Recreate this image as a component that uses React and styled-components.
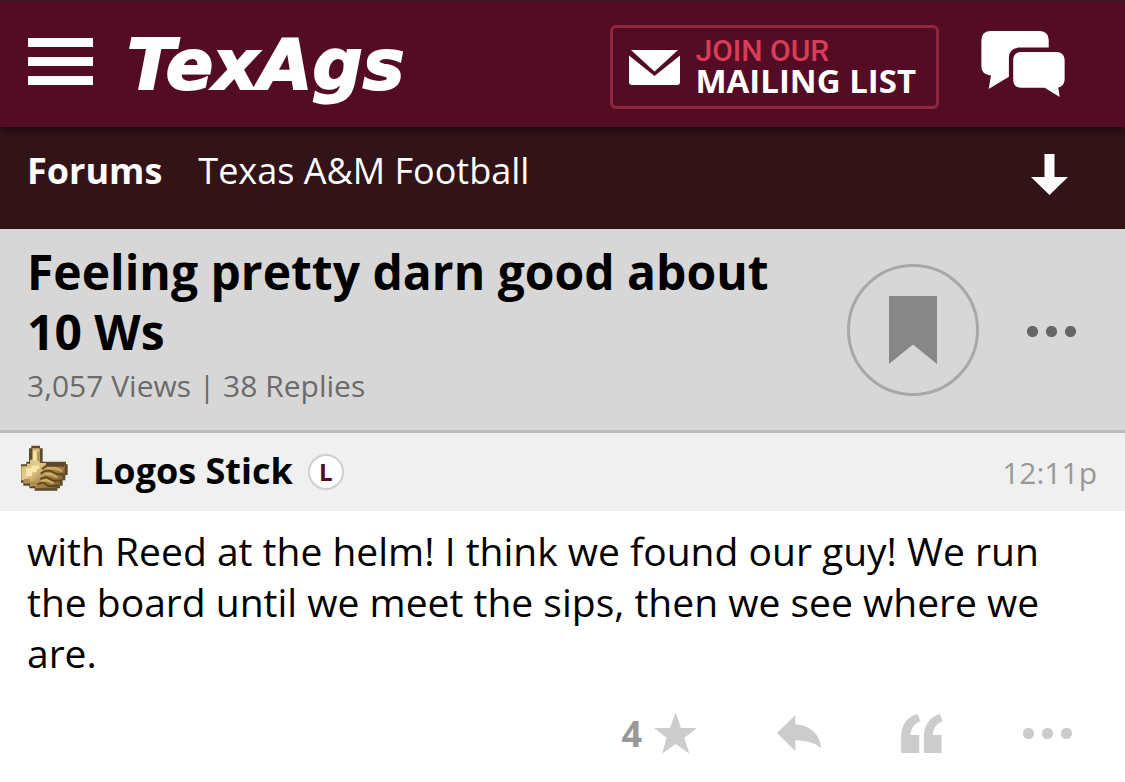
import React from "react";
import styled, { createGlobalStyle } from "styled-components";

const GlobalStyle = createGlobalStyle`
  *, *::before, *::after { box-sizing: border-box; }
  body {
    margin: 0;
    background: #fff;
    color: #000;
    font-family: "Open Sans", "Noto Sans", sans-serif;
  }
  button { font: inherit; color: inherit; }
  svg { display: block; flex: none; }
`;

const PlainButton = styled.button`
  display: flex;
  align-items: center;
  justify-content: center;
  padding: 0;
  border: 0;
  background: none;
  cursor: pointer;
`;

const TopBar = styled.header`
  position: relative;
  display: flex;
  align-items: center;
  height: 127px;
  padding: 4px 60px 0 28px;
  background: #540c24;
  border-top: 3px solid #431424;
  box-shadow: 0 3px 8px rgba(0, 0, 0, 0.5);
`;

const MenuButton = styled(PlainButton)`
  flex-direction: column;
  gap: 10px;
  width: 65px;
  padding-bottom: 12px;
`;

const MenuLine = styled.span`
  width: 100%;
  height: 9px;
  background: #fff;
`;

const Logo = styled.a`
  margin-left: 34px;
  padding-bottom: 4px;
  color: #fff;
  font-family: "DejaVu Sans", sans-serif;
  font-size: 70px;
  font-weight: 700;
  font-style: italic;
  line-height: 76px;
  text-decoration: none;
  -webkit-text-stroke: 2px #fff;
`;

const MailingLink = styled.a`
  display: flex;
  align-items: center;
  gap: 15px;
  height: 84px;
  margin-left: auto;
  padding: 0 20px 0 16px;
  border: 3px solid #8e2840;
  border-radius: 6px;
  color: #fff;
  text-decoration: none;
`;

const MailingText = styled.span`
  display: flex;
  flex-direction: column;
  padding-bottom: 4px;
  white-space: nowrap;
`;

const MailingLead = styled.span`
  color: #d83c58;
  font-family: Roboto, sans-serif;
  font-size: 30px;
  font-weight: 500;
  line-height: 31px;
`;

const MailingName = styled.strong`
  font-size: 33px;
  font-weight: 700;
  line-height: 30px;
`;

const ChatButton = styled(PlainButton)`
  margin-left: 42px;
  padding-bottom: 6px;
`;

const Crumbs = styled.nav`
  display: flex;
  align-items: flex-start;
  gap: 36px;
  height: 102px;
  padding: 19px 28px 0 27px;
  background: #321318;
  color: #fff;
`;

const Crumb = styled.a`
  color: inherit;
  font-size: 36px;
  font-weight: ${(p) => (p.$strong ? 700 : 400)};
  line-height: 50px;
  text-decoration: none;
`;

const JumpButton = styled(PlainButton)`
  width: 96px;
  height: 56px;
  margin-left: auto;
`;

const Topic = styled.section`
  display: flex;
  align-items: center;
  gap: 28px;
  padding: 13px 28px 24px 27px;
  background: #d7d7d7;
  border-bottom: 3px solid #bcbcbc;
`;

const TopicText = styled.div`
  flex: 1;
  min-width: 0;
`;

const TopicTitle = styled.h1`
  margin: 0 0 4px;
  font-size: 48px;
  font-weight: 700;
  line-height: 60px;
`;

const TopicStats = styled.p`
  margin: 0;
  color: #6b6b6b;
  font-size: 30px;
  line-height: 40px;
`;

const TopicTools = styled.div`
  display: flex;
  align-items: center;
  gap: 26px;
  padding-top: 12px;
`;

const BookmarkButton = styled(PlainButton)`
  width: 132px;
  height: 132px;
  border: 3px solid #a8a8a8;
  border-radius: 50%;
`;

const MoreButton = styled(PlainButton)`
  width: 92px;
  height: 60px;
  padding-top: 3px;
`;

const PostHeader = styled.header`
  display: flex;
  align-items: center;
  height: 78px;
  padding: 0 28px 0 20px;
  background: #f0f0f0;
`;

const Avatar = styled.span`
  padding-bottom: 9px;
`;

const Author = styled.a`
  margin: 0 15px 0 25px;
  color: #000;
  font-size: 36px;
  font-weight: 700;
  line-height: 50px;
  padding-bottom: 3px;
  text-decoration: none;
`;

const LevelBadge = styled.span`
  display: flex;
  align-items: center;
  justify-content: center;
  width: 36px;
  height: 36px;
  border: 2px solid #cfcfcf;
  border-radius: 50%;
  background: #fff;
  color: #500c1c;
  font-size: 24px;
  font-weight: 700;
  line-height: 30px;
`;

const PostTime = styled.time`
  margin-left: auto;
  padding-top: 2px;
  color: #999;
  font-size: 30px;
  line-height: 40px;
`;

const PostBody = styled.p`
  margin: 0;
  padding: 14px 28px 0 27px;
  font-size: 39px;
  line-height: 51px;
`;

const PostActions = styled.footer`
  display: flex;
  align-items: center;
  justify-content: flex-end;
  gap: 80px;
  padding: 29px 53px 23px 28px;
`;

const ActionButton = styled(PlainButton)`
  gap: 12px;
  height: 52px;
  color: #999;
  font-size: 36px;
  font-weight: 700;
`;

const Dots = ({ color }) => (
  <svg width="49" height="11" viewBox="0 0 49 11" fill={color} aria-hidden="true">
    <circle cx="5.5" cy="5.5" r="5.6" />
    <circle cx="24.5" cy="5.5" r="5.6" />
    <circle cx="43.5" cy="5.5" r="5.6" />
  </svg>
);

const EnvelopeIcon = () => (
  <svg width="51" height="35" viewBox="0 0 51 35" fill="#fff" aria-hidden="true">
    <path d="M2 0H49L25.5 21.5Z" />
    <path d="M0 5.5L25.5 26L51 5.5V32Q51 35 48 35H3Q0 35 0 32Z" />
  </svg>
);

const ChatIcon = () => (
  <svg width="84" height="66" viewBox="0 0 251 199" fill="#fff" aria-hidden="true">
    <path d="M26 0H176Q203 2 203 27V50H113Q84 52 83 80V138L22 175L29 134Q0 131 0 106V27Q1 2 26 0Z" />
    <path d="M118 63H229Q249 65 251 85V148Q249 167 232 170L236 199L191 171H118Q98 170 96 149V85Q98 65 118 63Z" />
  </svg>
);

const ArrowDownIcon = () => (
  <svg width="37" height="41" viewBox="0 0 37 41" fill="#fff" aria-hidden="true">
    <path d="M13.5 0H23.5V23H37L18.5 41L0 23H13.5Z" />
  </svg>
);

const BookmarkIcon = () => (
  <svg width="48" height="68" viewBox="0 0 48 68" fill="#878787" aria-hidden="true">
    <path d="M0 0H48V68L24 48.5L0 68Z" />
  </svg>
);

const StarIcon = () => (
  <svg width="43" height="42" viewBox="164 66 129 124" fill="#ccc" aria-hidden="true">
    <path d="M229 66L245 113H293L255 142L270 190L229 161L188 190L202 142L164 113H212Z" />
  </svg>
);

const ReplyIcon = () => (
  <svg width="44" height="36" viewBox="525 76 132 108" fill="#ccc" aria-hidden="true">
    <path d="M525 130L580 76V104C622 107 655 132 657 176C640 160 615 153 580 152V184Z" />
  </svg>
);

const QuoteIcon = () => (
  <svg width="42" height="39" viewBox="893 66 125 117" fill="#ccc" aria-hidden="true">
    <path d="M893 183V132C893 98 915 72 942 66L951 88C934 94 922 108 921 129H947V183Z" />
    <path d="M961 183V132C961 98 983 72 1009 66L1018 88C1001 94 989 108 988 129H1014V183Z" />
  </svg>
);

const ThumbIcon = () => (
  <svg width="48" height="46" viewBox="26 26 144 138" role="img" aria-label="Thumbs up">
    <defs>
      <linearGradient id="skin" x1="0" y1="0" x2="1" y2="1">
        <stop offset="0" stopColor="#c9ab68" />
        <stop offset="0.4" stopColor="#e6cc8c" />
        <stop offset="0.65" stopColor="#a98849" />
        <stop offset="1" stopColor="#6c5025" />
      </linearGradient>
    </defs>
    <path
      fill="#5d4a2b"
      d="M60 28H86V36H94V76H164V84H169V116H162V132H154V148H146V156H138V163H70V156H54V148H36V139H29V84H45V76H53V36H60Z"
    />
    <path
      fill="url(#skin)"
      d="M63 36H85V80H104V86H160V114H154V130H146V146H136V156H72V150H56V141H37V132H30V90H47V82H56V70H63Z"
    />
    <path fill="#f8e5ab" d="M66 44H75V74H66ZM44 96H60V88H84V98H76V108H62V120H44Z" />
    <path fill="#b18e4d" d="M78 46H83V74H78ZM38 128H56V136H72V146H56V139H38Z" />
    <path
      fill="none"
      stroke="#60481f"
      strokeWidth="6"
      d="M92 98L106 88H158M88 112L102 103H116L140 114H158M86 128L104 122L128 133H150M78 144L94 138L112 149H140"
    />
    <path
      fill="none"
      stroke="#d2b06a"
      strokeWidth="6"
      d="M108 96H132L152 104M102 114L118 113L138 123M90 134L106 131L126 141"
    />
  </svg>
);

export default function App() {
  return (
    <>
      <GlobalStyle />
      <TopBar>
        <MenuButton type="button" aria-label="Menu">
          <MenuLine />
          <MenuLine />
          <MenuLine />
        </MenuButton>
        <Logo href="#home">TexAgs</Logo>
        <MailingLink href="#mailing-list">
          <EnvelopeIcon />
          <MailingText>
            <MailingLead>JOIN OUR</MailingLead>
            <MailingName>MAILING LIST</MailingName>
          </MailingText>
        </MailingLink>
        <ChatButton type="button" aria-label="Messages">
          <ChatIcon />
        </ChatButton>
      </TopBar>
      <Crumbs aria-label="Breadcrumb">
        <Crumb href="#forums" $strong>Forums</Crumb>
        <Crumb href="#football">Texas A&amp;M Football</Crumb>
        <JumpButton type="button" aria-label="Jump to bottom">
          <ArrowDownIcon />
        </JumpButton>
      </Crumbs>
      <main>
        <Topic>
          <TopicText>
            <TopicTitle>Feeling pretty darn good about 10 Ws</TopicTitle>
            <TopicStats>3,057 Views | 38 Replies</TopicStats>
          </TopicText>
          <TopicTools>
            <BookmarkButton type="button" aria-label="Bookmark topic">
              <BookmarkIcon />
            </BookmarkButton>
            <MoreButton type="button" aria-label="Topic options">
              <Dots color="#666" />
            </MoreButton>
          </TopicTools>
        </Topic>
        <article>
          <PostHeader>
            <Avatar>
              <ThumbIcon />
            </Avatar>
            <Author href="#author">Logos Stick</Author>
            <LevelBadge>L</LevelBadge>
            <PostTime>12:11p</PostTime>
          </PostHeader>
          <PostBody>
            with Reed at the helm! I think we found our guy! We run the board
            until we meet the sips, then we see where we are.
          </PostBody>
          <PostActions>
            <ActionButton type="button" aria-label="4 stars">
              4
              <StarIcon />
            </ActionButton>
            <ActionButton type="button" aria-label="Reply">
              <ReplyIcon />
            </ActionButton>
            <ActionButton type="button" aria-label="Quote">
              <QuoteIcon />
            </ActionButton>
            <ActionButton type="button" aria-label="Post options">
              <Dots color="#ccc" />
            </ActionButton>
          </PostActions>
        </article>
      </main>
    </>
  );
}
